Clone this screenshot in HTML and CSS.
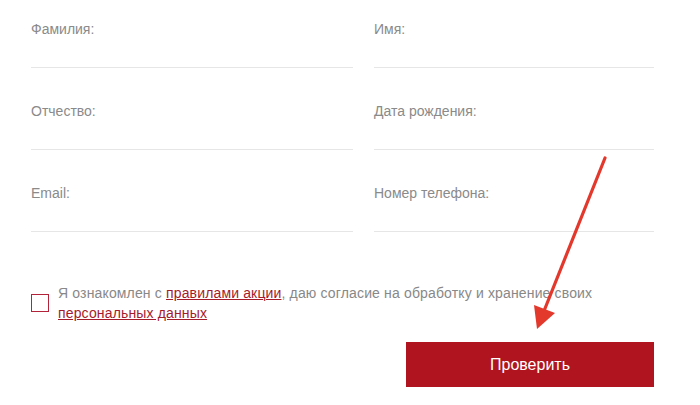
FILE: index.html
```html
<!DOCTYPE html>
<html lang="ru">
<head>
    <meta charset="UTF-8">
    <meta name="viewport" content="width=device-width, initial-scale=1.0">
    <title>Проверка</title>
    <link rel="stylesheet" href="styles.css">
</head>
<body>
    <div class="page">
        <form class="form">
            <div class="fields">
                <div class="field"><label>Фамилия:</label></div>
                <div class="field"><label>Имя:</label></div>
                <div class="field"><label>Отчество:</label></div>
                <div class="field"><label>Дата рождения:</label></div>
                <div class="field"><label>Email:</label></div>
                <div class="field"><label>Номер телефона:</label></div>
            </div>
            <div class="agree">
                <span class="box"></span>
                <p>Я ознакомлен с <a href="#">правилами акции</a>, даю согласие на обработку и хранение своих <a href="#">персональных данных</a></p>
            </div>
            <div class="actions">
                <button type="button" class="btn">Проверить</button>
            </div>
        </form>
        <svg class="arrow" width="700" height="405" viewBox="0 0 700 405">
            <line x1="605" y1="158" x2="544" y2="311" stroke="#e3382c" stroke-width="3.2" stroke-linecap="round"/>
            <polygon points="537,329 534,305 555,313" fill="#e3382c"/>
        </svg>
    </div>
</body>
</html>
```

FILE: styles.css
```css
body {
    margin: 0;
    background: #fff;
    font-family: "Liberation Sans", Arial, sans-serif;
}
.page {
    position: relative;
    width: 700px;
    height: 405px;
    overflow: hidden;
}
.form {
    padding-left: 31px;
    width: 623px;
}
.fields {
    display: grid;
    grid-template-columns: 322px 280px;
    column-gap: 21px;
    row-gap: 14px;
}
.field {
    height: 47px;
    padding-top: 20px;
    border-bottom: 1px solid #e6e6e6;
}
.field label {
    display: block;
    font-size: 14px;
    line-height: 18px;
    color: #8a8a8a;
}
.agree {
    display: flex;
    align-items: center;
    margin-top: 51px;
}
.box {
    flex: none;
    width: 16px;
    height: 16px;
    border: 1px solid #b3243a;
    margin-right: 9px;
}
.agree p {
    margin: 0;
    font-size: 14px;
    line-height: 20px;
    letter-spacing: 0.15px;
    color: #888;
}
.agree a {
    color: #a51b2b;
}
.actions {
    display: flex;
    justify-content: flex-end;
    margin-top: 19px;
}
.btn {
    width: 248px;
    height: 45px;
    border: none;
    background: #b0151f;
    color: #fff;
    font-family: "Liberation Sans", Arial, sans-serif;
    font-size: 16px;
    cursor: pointer;
}
.arrow {
    position: absolute;
    left: 0;
    top: 0;
    pointer-events: none;
}
```
